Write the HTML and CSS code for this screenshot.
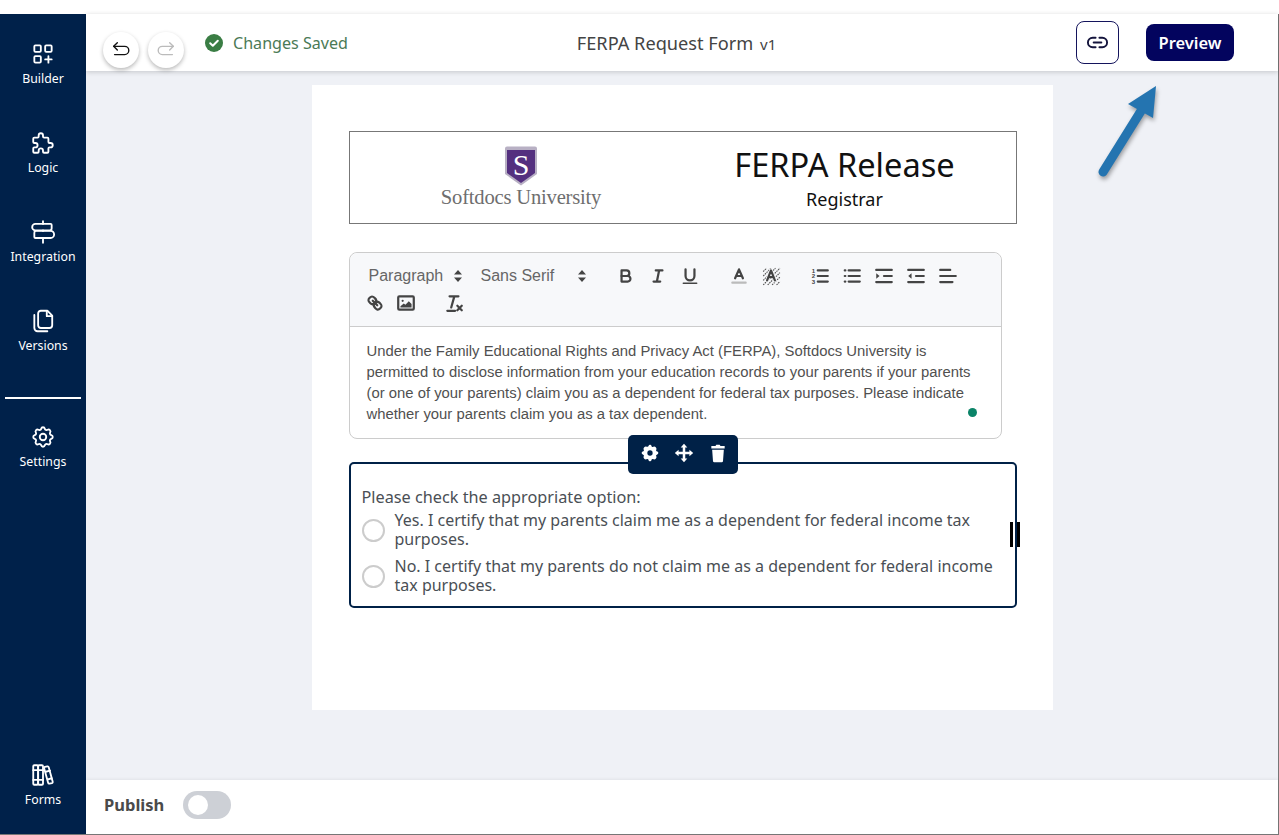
FILE: index.html
```html
<!DOCTYPE html>
<html lang="en">
<head>
    <meta charset="UTF-8">
    <meta name="viewport" content="width=device-width, initial-scale=1.0">
    <title>FERPA Request Form</title>
    <link rel="stylesheet" href="styles.css">
</head>
<body>
    <div class="top-strip"></div>
    <div class="app">
        <nav class="sidebar">
            <a class="nav-item">
                <svg class="nav-icon" viewBox="0 0 24 24"><rect x="4" y="4" width="6" height="6" rx="1"/><rect x="14" y="4" width="6" height="6" rx="1"/><rect x="4" y="14" width="6" height="6" rx="1"/><path d="M14 17h6m-3 -3v6"/></svg>
                <span>Builder</span>
            </a>
            <a class="nav-item">
                <svg class="nav-icon" viewBox="0 0 24 24"><path d="M4 7h3a1 1 0 0 0 1 -1v-1a2 2 0 0 1 4 0v1a1 1 0 0 0 1 1h3a1 1 0 0 1 1 1v3a1 1 0 0 0 1 1h1a2 2 0 0 1 0 4h-1a1 1 0 0 0 -1 1v3a1 1 0 0 1 -1 1h-3a1 1 0 0 1 -1 -1v-1a2 2 0 0 0 -4 0v1a1 1 0 0 1 -1 1h-3a1 1 0 0 1 -1 -1v-3a1 1 0 0 1 1 -1h1a2 2 0 0 0 0 -4h-1a1 1 0 0 1 -1 -1v-3a1 1 0 0 1 1 -1"/></svg>
                <span>Logic</span>
            </a>
            <a class="nav-item">
                <svg class="nav-icon" viewBox="0 0 24 24"><path d="M12 22v-4.500M12 11v-.500M12 4.500v-2.500"/><path d="M5 4.500h14a1 1 0 0 1 1 1v3a2 2 0 0 1 -2 2h-13a2.900 2.900 0 0 1 0 -6z"/><path d="M5 11h14a3.200 3.200 0 0 1 0 6.500h-14a1 1 0 0 1 -1 -1v-3.500a2 2 0 0 1 1 -2z"/></svg>
                <span>Integration</span>
            </a>
            <a class="nav-item">
                <svg class="nav-icon" viewBox="0 0 24 24"><path d="M10 2.500h6l4.500 4.500v9a2.500 2.500 0 0 1 -2.500 2.500h-8a2.500 2.500 0 0 1 -2.500 -2.500v-11a2.500 2.500 0 0 1 2.500 -2.500z"/><path d="M15.500 3v4.500h5"/><path d="M4 6.500v12a3 3 0 0 0 3 3h9"/></svg>
                <span>Versions</span>
            </a>
            <div class="nav-divider"></div>
            <a class="nav-item">
                <svg class="nav-icon" viewBox="0 0 24 24"><path d="M10.325 4.317c.426 -1.756 2.924 -1.756 3.35 0a1.724 1.724 0 0 0 2.573 1.066c1.543 -.94 3.31 .826 2.37 2.37a1.724 1.724 0 0 0 1.065 2.572c1.756 .426 1.756 2.924 0 3.35a1.724 1.724 0 0 0 -1.066 2.573c.94 1.543 -.826 3.31 -2.37 2.37a1.724 1.724 0 0 0 -2.572 1.065c-.426 1.756 -2.924 1.756 -3.35 0a1.724 1.724 0 0 0 -2.573 -1.066c-1.543 .94 -3.31 -.826 -2.37 -2.37a1.724 1.724 0 0 0 -1.065 -2.572c-1.756 -.426 -1.756 -2.924 0 -3.35a1.724 1.724 0 0 0 1.066 -2.573c-.94 -1.543 .826 -3.31 2.37 -2.37c1 .608 2.296 .07 2.572 -1.065z"/><circle cx="12" cy="12" r="3"/></svg>
                <span>Settings</span>
            </a>
            <a class="nav-item nav-bottom">
                <svg class="nav-icon" viewBox="0 0 24 24"><rect x="3" y="3" width="4.500" height="18" rx="1"/><rect x="7.500" y="3" width="4.500" height="18" rx="1"/><path d="M3 7.500h9M3 16.500h9"/><path d="M13.800 4.560l2.184 -.53c.562 -.135 1.133 .19 1.282 .732l3.695 13.418a1.020 1.020 0 0 1 -.634 1.219l-.133 .041l-2.184 .53c-.562 .135 -1.133 -.19 -1.282 -.732l-3.695 -13.418a1.020 1.020 0 0 1 .634 -1.219l.133 -.041z"/><path d="M14.500 9l4 -1M16.500 16l3.500 -1"/></svg>
                <span>Forms</span>
            </a>
        </nav>

        <div class="main">
            <header class="head">
                <div class="head-left">
                    <button class="round-btn">
                        <svg viewBox="0 0 24 24"><path d="M8 12l-4 -4l4 -4"/><path d="M4 8h12a4.500 4.500 0 0 1 0 9h-11"/></svg>
                    </button>
                    <button class="round-btn is-off">
                        <svg viewBox="0 0 24 24"><path d="M16 12l4 -4l-4 -4"/><path d="M20 8h-12a4.500 4.500 0 0 0 0 9h11"/></svg>
                    </button>
                    <div class="saved">
                        <svg viewBox="0 0 18 18"><circle cx="9" cy="9" r="9"/><path d="M5.200 9.300l2.600 2.500l5 -5"/></svg>
                        <span>Changes Saved</span>
                    </div>
                </div>
                <div class="head-title">FERPA Request Form <small>v1</small></div>
                <div class="head-right">
                    <button class="link-btn">
                        <svg viewBox="0 0 24 24"><path d="M10 7h-3a5 5 0 0 0 0 10h3"/><path d="M14 7h3a5 5 0 0 1 0 10h-3"/><path d="M8 12h8"/></svg>
                    </button>
                    <button class="preview-btn">Preview</button>
                </div>
            </header>

            <div class="workspace">
                <div class="canvas">
                    <div class="form-header">
                        <div class="logo">
                            <svg class="shield" viewBox="0 0 34 40">
                                <path class="shield-edge" d="M3 0.500h28a2 2 0 0 1 2 2v25.500l-16 11.500l-16 -11.500v-25.500a2 2 0 0 1 2 -2z"/>
                                <path class="shield-fill" d="M3 4h28v23l-14 10l-14 -10z"/>
                                <text x="17" y="29" text-anchor="middle">S</text>
                            </svg>
                            <div class="logo-name">Softdocs University</div>
                        </div>
                        <div class="form-heading">
                            <h1>FERPA Release</h1>
                            <p>Registrar</p>
                        </div>
                    </div>

                    <div class="editor">
                        <div class="toolbar">
                            <div class="tool-row">
                                <span class="picker picker-para">Paragraph<svg viewBox="0 0 8 12"><path d="M4 0l4 4.500h-8zM4 12l4 -4.500h-8z"/></svg></span>
                                <span class="picker picker-font">Sans Serif<svg viewBox="0 0 8 12"><path d="M4 0l4 4.500h-8zM4 12l4 -4.500h-8z"/></svg></span>
                                <span class="tool tool-first"><svg viewBox="0 0 18 18"><path d="M5,4H9.500A2.500,2.500,0,0,1,12,6.500v0A2.500,2.500,0,0,1,9.500,9H5V4Z"/><path d="M5,9h5.500A2.500,2.500,0,0,1,13,11.500v0A2.500,2.500,0,0,1,10.500,14H5V9Z"/></svg></span>
                                <span class="tool"><svg viewBox="0 0 18 18"><path d="M7 4h6M5 14h6M8 14l2 -10"/></svg></span>
                                <span class="tool"><svg viewBox="0 0 18 18"><path d="M5,3V9a4,4,0,0,0,4,4h0a4,4,0,0,0,4-4V3"/><path d="M3 15.500h12" class="thin"/></svg></span>
                                <span class="tool tool-group"><svg viewBox="0 0 18 18"><path d="M5.500 11l3.500 -8l3.500 8M6.400 9h5.200"/><path d="M3 15h12" class="pale"/></svg></span>
                                <span class="tool"><svg viewBox="0 0 18 18"><path class="hatch" d="M2 5l3 -3M2 9l7 -7M2 13l11 -11M2 17l15 -15M6 17l11 -11M10 17l7 -7M14 17l3 -3"/><path class="halo" d="M5.500 13l3.500 -9l3.500 9"/><path d="M5.500 13l3.500 -9l3.500 9M6.900 10h4.200"/></svg></span>
                                <span class="tool tool-group"><svg viewBox="0 0 18 18"><path d="M7 4h9M7 9h9M7 14h9"/><text x="1.500" y="6">1</text><text x="1.500" y="11">2</text><text x="1.500" y="16">3</text></svg></span>
                                <span class="tool"><svg viewBox="0 0 18 18"><path d="M6 4h10M6 9h10M6 14h10M2.500 4h.5M2.500 9h.5M2.500 14h.5"/></svg></span>
                                <span class="tool"><svg viewBox="0 0 18 18"><path d="M2 3.500h14M9 9h7M2 14.500h14"/><path class="solid" d="M2 6.500v5l3 -2.500z"/></svg></span>
                                <span class="tool"><svg viewBox="0 0 18 18"><path d="M2 3.500h14M9 9h7M2 14.500h14"/><path class="solid" d="M5 6.500v5l-3 -2.500z"/></svg></span>
                                <span class="tool"><svg viewBox="0 0 18 18"><path d="M2 3.500h9M2 9h14M2 14.500h11"/></svg></span>
                            </div>
                            <div class="tool-row">
                                <span class="tool tool-link"><svg viewBox="0 0 18 18"><path d="M7 7l4 4"/><path d="M8.900,4.577a3.476,3.476,0,0,1,.36,4.679A3.476,3.476,0,0,1,4.577,8.900C3.185,7.500,2.035,6.400,4.217,4.217S7.500,3.185,8.900,4.577Z"/><path d="M13.423,9.100a3.476,3.476,0,0,0-4.679-.36,3.476,3.476,0,0,0,.36,4.679c1.392,1.392,2.500,2.542,4.679.36S14.815,10.500,13.423,9.100Z"/></svg></span>
                                <span class="tool"><svg viewBox="0 0 18 18"><rect x="2" y="3" width="14" height="12" rx="1"/><circle class="solid" cx="6" cy="7" r="1"/><path class="solid" d="M4 13v-1l3 -2.500l1.500 1l3 -3l2.500 2.500v3z"/></svg></span>
                                <span class="tool tool-clean"><svg viewBox="0 0 18 18"><path d="M5 3h8M6.500 13l2.800 -10M3 16h7M12 11.500l4 4M16 11.500l-4 4"/></svg></span>
                            </div>
                        </div>
                        <div class="editor-body">
                            Under the Family Educational Rights and Privacy Act (FERPA), Softdocs University is permitted to disclose information from your education records to your parents if your parents (or one of your parents) claim you as a dependent for federal tax purposes. Please indicate whether your parents claim you as a tax dependent.
                            <span class="status-dot"></span>
                        </div>
                    </div>

                    <div class="question">
                        <div class="field-tools">
                            <svg viewBox="0 0 24 24"><path class="gear" d="M10.325 3.317c.426 -1.756 2.924 -1.756 3.35 0a1.724 1.724 0 0 0 2.573 1.066c1.543 -.94 4.310 1.826 3.370 3.370a1.724 1.724 0 0 0 1.065 2.572c1.756 .426 1.756 2.924 0 3.350a1.724 1.724 0 0 0 -1.066 2.573c.94 1.543 -1.826 4.310 -3.370 3.370a1.724 1.724 0 0 0 -2.572 1.065c-.426 1.756 -2.924 1.756 -3.35 0a1.724 1.724 0 0 0 -2.573 -1.066c-1.543 .94 -4.310 -1.826 -3.370 -3.370a1.724 1.724 0 0 0 -1.065 -2.572c-1.756 -.426 -1.756 -2.924 0 -3.350a1.724 1.724 0 0 0 1.066 -2.573c-.94 -1.543 1.826 -4.310 3.370 -3.370c1 .608 2.296 .07 2.572 -1.065z"/><circle class="gear-hole" cx="12" cy="12" r="3.200"/></svg>
                            <svg viewBox="0 0 24 24"><path class="gear" d="M12 1l4 4.500h-2.500v5h5v-2.500l4.500 4l-4.500 4v-2.500h-5v5h2.500l-4 4.500l-4 -4.500h2.500v-5h-5v2.500l-4.500 -4l4.500 -4v2.500h5v-5h-2.500z"/></svg>
                            <svg viewBox="0 0 24 24"><path class="gear" d="M4 3.500h5l1 -1.500h4l1 1.500h5v3h-16zM5 8h14l-1 14a1.500 1.500 0 0 1 -1.500 1h-9a1.500 1.500 0 0 1 -1.500 -1z"/></svg>
                        </div>
                        <div class="question-label">Please check the appropriate option:</div>
                        <label class="option">
                            <span class="radio"></span>
                            <span>Yes. I certify that my parents claim me as a dependent for federal income tax purposes.</span>
                        </label>
                        <label class="option">
                            <span class="radio"></span>
                            <span>No. I certify that my parents do not claim me as a dependent for federal income tax purposes.</span>
                        </label>
                        <div class="resize-handle"></div>
                    </div>
                </div>
            </div>

            <footer class="foot">
                <span class="publish">Publish</span>
                <span class="toggle"><span class="knob"></span></span>
            </footer>

            <svg class="callout" viewBox="0 0 70 100">
                <path class="callout-line" d="M9 87l38 -61"/>
                <path class="callout-head" d="M62 1l-28 18l25 14z"/>
            </svg>
        </div>
    </div>
</body>
</html>
```

FILE: styles.css
```css
* {
    box-sizing: border-box;
}
html, body {
    height: 100%;
}
body {
    margin: 0;
    display: flex;
    flex-direction: column;
    background: #fff;
    color: #444;
    font-family: "Noto Sans", sans-serif;
}
svg {
    display: block;
    fill: none;
    stroke-linecap: round;
    stroke-linejoin: round;
}
button {
    font-family: inherit;
    cursor: pointer;
}
.top-strip {
    height: 14px;
    flex: none;
}
.app {
    flex: 1;
    min-height: 0;
    display: flex;
    border-right: 1px solid #777;
    border-bottom: 1px solid #777;
}

/* left nav */
.sidebar {
    width: 86px;
    flex: none;
    display: flex;
    flex-direction: column;
    align-items: center;
    padding: 27px 0 25px;
    background: #00214a;
    color: #fff;
}
.nav-item {
    display: flex;
    flex-direction: column;
    align-items: center;
    gap: 3px;
    margin-bottom: 42px;
    font-size: 12.3px;
    line-height: 18px;
}
.nav-icon {
    width: 26px;
    height: 26px;
    stroke: #fff;
    stroke-width: 1.7;
}
.nav-divider {
    width: 76px;
    height: 2px;
    flex: none;
    margin-bottom: 25px;
    background: #fff;
}
.nav-bottom {
    margin-top: auto;
    margin-bottom: 0;
}

/* top bar */
.main {
    flex: 1;
    min-width: 0;
    position: relative;
    display: flex;
    flex-direction: column;
    background: #eff1f6;
}
.head {
    height: 57px;
    flex: none;
    position: relative;
    z-index: 2;
    display: grid;
    grid-template-columns: 1fr auto 1fr;
    align-items: center;
    padding: 0 28px 0 17px;
    background: #fff;
    box-shadow: 0 1px 5px rgba(0, 0, 0, 0.18);
}
.head-left {
    display: flex;
    align-items: flex-start;
    gap: 9px;
    padding-top: 14px;
}
.round-btn {
    width: 36px;
    height: 36px;
    padding: 7px;
    border: 0;
    border-radius: 50%;
    background: #fff;
    box-shadow: 0 2px 4px rgba(0, 0, 0, 0.28);
}
.round-btn svg {
    width: 22px;
    height: 22px;
    stroke: #111;
    stroke-width: 1.5;
}
.round-btn.is-off svg {
    stroke: #bbb;
}
.saved {
    display: flex;
    align-items: center;
    gap: 10px;
    margin: -8px 0 0 12px;
    color: #4b7a56;
    font-size: 16.1px;
    line-height: 38px;
}
.saved svg {
    width: 18px;
    height: 18px;
}
.saved circle {
    fill: #3a7d44;
}
.saved path {
    stroke: #fff;
    stroke-width: 2;
}
.head-title {
    color: #444;
    font-size: 18.2px;
}
.head-title small {
    margin-left: 2px;
    font-size: 15px;
}
.head-right {
    display: flex;
    justify-content: flex-end;
    align-items: center;
    gap: 27px;
    margin-right: 16px;
}
.link-btn {
    width: 43px;
    height: 43px;
    padding: 9px;
    border: 1px solid #14145c;
    border-radius: 8px;
    background: #fff;
}
.link-btn svg {
    width: 23px;
    height: 23px;
    stroke: #14143c;
    stroke-width: 2;
}
.preview-btn {
    width: 88px;
    height: 37px;
    padding: 0;
    border: 0;
    border-radius: 8px;
    background: #03045e;
    color: #fff;
    font-size: 16.5px;
    font-weight: 600;
}

/* form canvas */
.workspace {
    flex: 1;
    min-height: 0;
    display: flex;
    justify-content: center;
    padding-top: 14px;
}
.canvas {
    width: 741px;
    height: 625px;
    padding: 46px 36px 0 37px;
    background: #fff;
}
.form-header {
    height: 93px;
    display: flex;
    align-items: center;
    border: 1px solid #777;
}
.logo {
    width: 324px;
    flex: none;
    display: flex;
    flex-direction: column;
    align-items: center;
    padding-left: 19px;
}
.shield {
    width: 34px;
    height: 40px;
}
.shield-edge {
    fill: #b8b0c4;
}
.shield-fill {
    fill: #54307f;
}
.shield text {
    fill: #fff;
    font-family: "Liberation Serif", serif;
    font-size: 30px;
}
.logo-name {
    margin-top: -1px;
    color: #6e6e6e;
    font-family: "Liberation Serif", serif;
    font-size: 20.6px;
    line-height: 24px;
    letter-spacing: -0.2px;
}
.form-heading {
    flex: 1;
    padding-top: 1px;
    text-align: center;
    color: #111;
}
.form-heading h1 {
    margin: 0;
    font-size: 32.6px;
    font-weight: 400;
    line-height: 42px;
}
.form-heading p {
    margin: 0;
    font-size: 18px;
    line-height: 26px;
}
.editor {
    width: 653px;
    height: 187px;
    margin-top: 28px;
    border: 1px solid #ccc;
    border-radius: 8px;
}
.toolbar {
    height: 74px;
    padding: 9px 0 0 8px;
    background: #f7f8fa;
    border-bottom: 1px solid #ccc;
    border-radius: 8px 8px 0 0;
}
.tool-row {
    height: 27px;
    display: flex;
    align-items: center;
}
.picker {
    flex: none;
    display: flex;
    align-items: center;
    justify-content: space-between;
    padding: 0 8px 0 11px;
    color: #666;
    font-family: "Liberation Sans", sans-serif;
    font-size: 16px;
}
.picker svg {
    width: 8px;
    height: 12px;
    fill: #444;
}
.picker-para {
    width: 112px;
}
.picker-font {
    width: 124px;
}
.tool {
    width: 32px;
    flex: none;
    display: flex;
    justify-content: center;
}
.tool svg {
    width: 20px;
    height: 20px;
    stroke: #444;
    stroke-width: 2;
}
.tool text {
    fill: #444;
    stroke: none;
    font-family: "Liberation Sans", sans-serif;
    font-size: 5.500px;
    font-weight: 700;
}
.tool .thin {
    stroke-width: 1.4;
}
.tool .pale {
    stroke: #bbb;
}
.tool .hatch {
    stroke: #555;
    stroke-width: 1;
    stroke-linecap: butt;
    stroke-dasharray: 1.400 0.700;
}
.tool .halo {
    stroke: #f7f8fa;
    stroke-width: 3.5;
}
.tool .solid {
    fill: #444;
    stroke: none;
}
.tool-first {
    margin-left: 16px;
}
.tool-group {
    margin-left: 17px;
}
.tool-link {
    margin: 0 -1px 0 1px;
}
.tool-clean {
    margin-left: 16px;
}
.editor-body {
    position: relative;
    height: 111px;
    padding: 14px 17px 0;
    color: #505050;
    font-family: "Liberation Sans", sans-serif;
    font-size: 14.85px;
    line-height: 21px;
}
.status-dot {
    position: absolute;
    right: 24px;
    bottom: 21px;
    width: 9px;
    height: 9px;
    border-radius: 50%;
    background: #0b8468;
}
.question {
    position: relative;
    height: 146px;
    margin-top: 23px;
    padding: 22px 12px 0 11px;
    border: 2px solid #002147;
    border-radius: 5px;
    color: #4a4f55;
    font-size: 16px;
}
.field-tools {
    position: absolute;
    top: -29px;
    left: 277px;
    width: 110px;
    height: 39px;
    display: flex;
    align-items: center;
    justify-content: center;
    gap: 14px;
    padding: 0 0 4px 2px;
    border-radius: 5px;
    background: #002147;
}
.field-tools svg {
    width: 20px;
    height: 20px;
}
.gear {
    fill: #fff;
}
.gear-hole {
    fill: #002147;
}
.question-label {
    margin-bottom: 3px;
    font-size: 16.25px;
    line-height: 22px;
}
.option {
    display: flex;
    align-items: center;
    gap: 10px;
    margin-bottom: 8px;
    line-height: 19px;
}
.radio {
    width: 23px;
    height: 23px;
    flex: none;
    border: 2px solid #ccc;
    border-radius: 50%;
}
.resize-handle {
    position: absolute;
    top: 58px;
    right: -5px;
    width: 10px;
    height: 25px;
    border-left: 3.5px solid #000;
    border-right: 3.5px solid #000;
}

/* bottom bar */
.foot {
    height: 54px;
    flex: none;
    display: flex;
    align-items: center;
    gap: 19px;
    padding: 0 0 5px 18px;
    background: #fff;
    box-shadow: 0 -1px 3px rgba(0, 0, 0, 0.06);
}
.publish {
    color: #4a4a4a;
    font-size: 16.500px;
    font-weight: 700;
}
.toggle {
    width: 48px;
    height: 28px;
    padding: 4px 5px;
    border-radius: 14px;
    background: #cdd0d6;
}
.knob {
    display: block;
    width: 20px;
    height: 20px;
    border-radius: 50%;
    background: #fff;
}

/* arrow drawn over the screenshot */
.callout {
    position: absolute;
    top: 71px;
    left: 1008px;
    z-index: 3;
    width: 70px;
    height: 100px;
    filter: drop-shadow(1px 3px 2px rgba(0, 0, 0, 0.35));
}
.callout-line {
    stroke: #2474b0;
    stroke-width: 9;
}
.callout-head {
    fill: #2474b0;
}
```
